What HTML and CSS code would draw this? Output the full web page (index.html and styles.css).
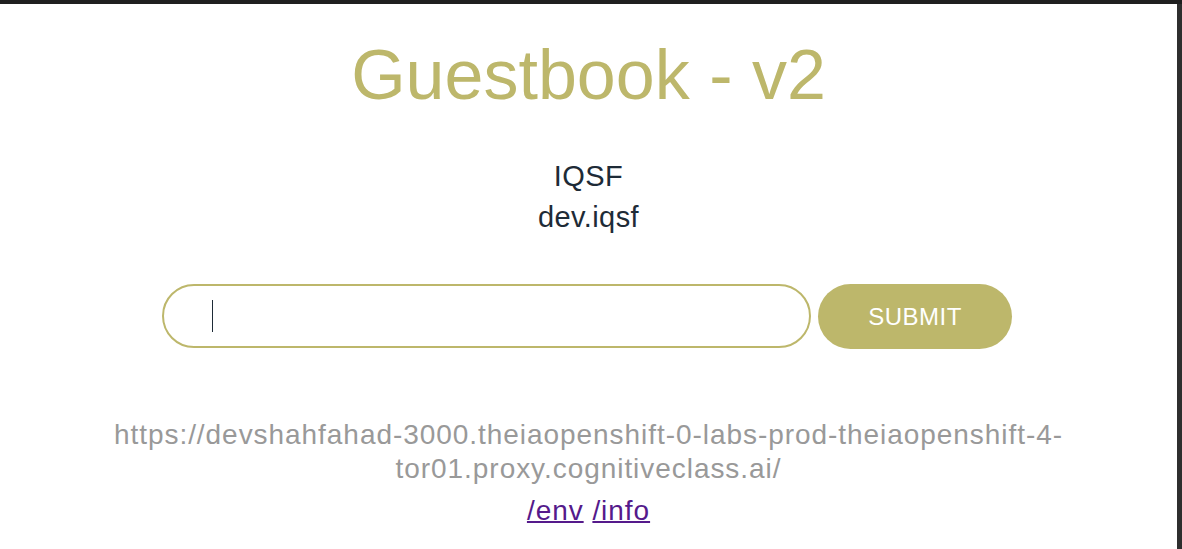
FILE: index.html
```html
<!DOCTYPE html>
<html lang="en">
<head>
<meta charset="utf-8">
<title>Guestbook - v2</title>
<link rel="stylesheet" href="styles.css">
</head>
<body>
<div class="topbar"></div>
<div class="frame">
  <main class="page">
    <h1 class="title">Guestbook - v2</h1>
    <div class="info">
      <div class="info-line">IQSF</div>
      <div class="info-line">dev.iqsf</div>
    </div>
    <form class="entry" onsubmit="return false">
      <div class="field">
        <input class="entry-input" type="text" aria-label="Guestbook entry">
        <span class="caret"></span>
      </div>
      <button class="submit" type="button">SUBMIT</button>
    </form>
    <div class="footer">
      <p class="host">https://devshahfahad-3000.theiaopenshift-0-labs-prod-theiaopenshift-4-tor01.proxy.cognitiveclass.ai/</p>
      <p class="links"><a class="link" href="#env">/env</a> <a class="link" href="#info">/info</a></p>
    </div>
  </main>
  <div class="scrollbar"></div>
</div>
</body>
</html>
```
FILE: styles.css
```css
html, body {
  margin: 0;
  padding: 0;
  background: #ffffff;
  height: 549px;
  overflow: hidden;
}

body {
  font-family: "Liberation Sans", Arial, sans-serif;
}

.topbar {
  height: 4px;
  background: #1f1f1f;
}

.frame {
  display: flex;
  height: 545px;
}

.page {
  flex: 1;
  display: flex;
  flex-direction: column;
  align-items: center;
  padding-top: 31px;
}

.scrollbar {
  width: 5px;
  background: #2e2e2e;
}

.title {
  margin: 0;
  font-size: 70px;
  font-weight: normal;
  line-height: 80px;
  color: #bdb76b;
}

.info {
  margin-top: 41px;
  text-align: center;
  color: #1e2b37;
  font-size: 29px;
  letter-spacing: 0.4px;
  line-height: 41px;
}

.entry {
  margin-top: 46px;
  display: flex;
  align-items: flex-start;
  gap: 7px;
  padding-right: 3px;
}

.field {
  position: relative;
}

.entry-input {
  display: block;
  box-sizing: border-box;
  width: 649px;
  height: 64px;
  border: 2px solid #bdb76b;
  border-radius: 32px;
  padding: 0 48px;
  font-family: "Liberation Sans", Arial, sans-serif;
  font-size: 24px;
  color: #1e2b37;
  background: #ffffff;
  outline: none;
}

.caret {
  position: absolute;
  left: 50px;
  top: 16px;
  width: 1px;
  height: 32px;
  background: #1e2b37;
}

.submit {
  box-sizing: border-box;
  width: 194px;
  height: 65px;
  border: none;
  border-radius: 33px;
  background: #bdb76b;
  color: #ffffff;
  font-family: "Liberation Sans", Arial, sans-serif;
  font-size: 24px;
  letter-spacing: 0.5px;
  padding: 0;
}

.footer {
  margin-top: 69px;
  max-width: 990px;
  text-align: center;
  font-size: 28px;
  letter-spacing: 0.95px;
  line-height: 34px;
}

.host {
  margin: 0;
  color: #999999;
}

.links {
  margin: 8px 0 0;
}

.link {
  color: #551a8b;
  text-decoration: underline;
  text-decoration-thickness: 2px;
}
```
